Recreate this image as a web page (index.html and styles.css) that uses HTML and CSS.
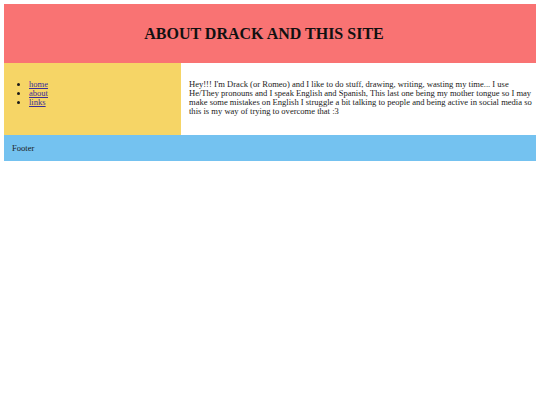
FILE: index.html
```html
<!DOCTYPE html>
<html>
<head>
<meta charset="utf-8">
<link rel="stylesheet" href="styles.css">
</head>
<body>
<div class="page">
  <header class="header"><h1 class="title">ABOUT DRACK AND THIS SITE</h1></header>
  <nav class="sidebar">
    <ul class="nav-list">
      <li><a href="#">home</a></li>
      <li><a href="#">about</a></li>
      <li><a href="#">links</a></li>
    </ul>
  </nav>
  <main class="content">
    <p class="text">Hey!!! I'm Drack (or Romeo) and I like to do stuff, drawing, writing, wasting my time... I use He/They pronouns and I speak English and Spanish, This last one being my mother tongue so I may make some mistakes on English I struggle a bit talking to people and being active in social media so this is my way of trying to overcome that :3</p>
  </main>
  <footer class="footer"><p class="footer-text">Footer</p></footer>
</div>
</body>
</html>
```
FILE: styles.css
```css
html, body { margin: 0; padding: 0; background: #fff; }
body {
  font-family: "Liberation Serif", "Times New Roman", serif;
  font-size: 8.55px;
  line-height: 9px;
  color: #1a1a1a;
  padding: 4px;
}
.page {
  display: grid;
  grid-template-columns: 177px 1fr;
  grid-template-rows: 59px auto auto;
}
.header {
  grid-column: 1 / 3;
  background: #f97373;
  display: flex;
  align-items: center;
  justify-content: center;
  padding-right: 12px;
}
.title {
  margin: 0;
  font-size: 16px;
  line-height: 18px;
  font-weight: bold;
  color: #111;
}
.sidebar {
  background: #f6d566;
  padding: 9px 8px;
}
.nav-list {
  margin: 8px 0;
  padding-left: 17px;
}
.nav-list a { color: #3b2e99; }
.content {
  background: #fff;
  padding: 9px 4px 11px 8px;
}
.text {
  margin: 8px 0;
}
.footer {
  grid-column: 1 / 3;
  background: #74c2f0;
  padding: 0 8px;
  height: 26px;
  display: flex;
  align-items: center;
}
.footer-text { margin: 0; padding-top: 1px; }
```
